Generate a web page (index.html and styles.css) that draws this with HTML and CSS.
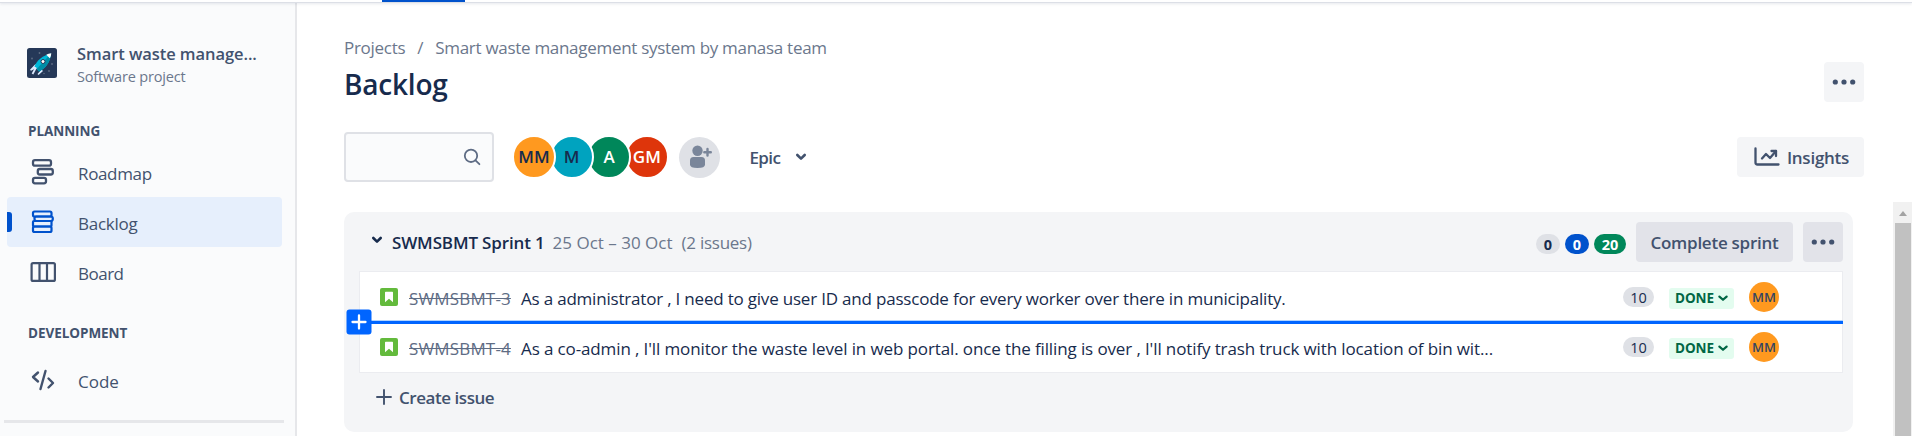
FILE: index.html
```html
<!DOCTYPE html>
<html lang="en">
<head>
<meta charset="utf-8">
<title>Backlog</title>
<link rel="stylesheet" href="styles.css">
</head>
<body>
<header class="topbar"><div class="topbar-tab"></div></header>
<div class="shell">
  <nav class="sidebar">
    <div class="project">
      <svg class="project-logo" viewBox="0 0 30 30">
        <rect width="30" height="30" rx="2.5" fill="#253858"/>
        <g fill="#5e6c84"><circle cx="12.500" cy="5" r=".9"/><circle cx="5" cy="10.500" r=".9"/><circle cx="25" cy="16" r=".9"/><circle cx="22" cy="23" r=".9"/><circle cx="17" cy="25.500" r=".8"/></g>
        <path d="M8.500 16 3 21.800l1 .9 6-3zM14.500 21.500 10.500 26l1 1 4.500-4z" fill="#deebff"/>
        <path d="M24 5.500C16 7 9.500 13 7.500 18.500l4.500 5C18 21 23.500 14 24 5.500z" fill="#00b8d9"/>
        <path d="M24 5.500c-.5 8.500-6 15.500-12 18L9.700 21z" fill="#008da6"/>
        <path d="M24.300 5.200c-2 .3-3.600.8-5 1.600l3.500 3.500c.9-1.600 1.400-3.300 1.500-5.100z" fill="#fff"/>
        <path d="M9 19.500 5.500 26" stroke="#deebff" stroke-width="1.800"/>
        <circle cx="16" cy="13.500" r="2" fill="#fff" stroke="#253858"/>
      </svg>
      <div class="project-text"><div class="project-name">Smart waste manage...</div><div class="project-type">Software project</div></div>
    </div>
    <h2 class="nav-heading">PLANNING</h2>
    <a class="nav-item">
      <svg class="nav-icon" viewBox="0 0 30 30" fill="none" stroke="currentColor" stroke-width="2.300"><rect x="6" y="3.200" width="18" height="5.500" rx="2"/><rect x="10.800" y="12" width="15" height="5.500" rx="2"/><rect x="6" y="20.800" width="13" height="5.500" rx="2"/></svg>
      <span class="t nav-roadmap">Roadmap</span></a>
    <a class="nav-item active">
      <svg class="nav-icon" viewBox="0 0 30 30" fill="none" stroke="currentColor" stroke-width="2.200"><rect x="6" y="4.500" width="18.500" height="5" rx="1.500"/><rect x="7.500" y="9.500" width="18.300" height="4.500" rx="2"/><rect x="6" y="14" width="18.500" height="5.500" rx="1"/><rect x="6" y="19.500" width="18.500" height="5.500" rx="1.500"/></svg>
      <span class="t nav-backlog">Backlog</span></a>
    <a class="nav-item">
      <svg class="nav-icon" viewBox="0 0 30 30" fill="none" stroke="currentColor" stroke-width="2.200"><rect x="4.600" y="6.100" width="23.300" height="17.800" rx="1.500"/><path d="M12.500 6v18M20 6v18"/></svg>
      <span class="t nav-board">Board</span></a>
    <h2 class="nav-heading second">DEVELOPMENT</h2>
    <a class="nav-item">
      <svg class="nav-icon" viewBox="0 0 30 30" fill="none" stroke="currentColor" stroke-width="2.400" stroke-linecap="round" stroke-linejoin="round"><path d="M11 7.500 6 12l5 4.500M18.500 6l-5 18M21.500 13.500l4.500 4.500-4.500 4.500"/></svg>
      <span class="t">Code</span></a>
    <div class="nav-divider"></div>
  </nav>
  <main class="main">
    <div class="crumbs"><span>Projects</span><span>/</span><span>Smart waste management system by manasa team</span></div>
    <div class="title-row">
      <h1>Backlog</h1>
      <button class="btn icon-btn"><svg viewBox="0 0 24 6" width="24" height="6" fill="currentColor"><circle cx="3.300" cy="3" r="2.600"/><circle cx="12" cy="3" r="2.600"/><circle cx="20.700" cy="3" r="2.600"/></svg></button>
    </div>
    <div class="toolbar">
      <div class="search"><svg width="18" height="18" viewBox="0 0 18 18" fill="none" stroke="#5e6c84" stroke-width="1.800" stroke-linecap="round"><circle cx="8" cy="7.800" r="6.200"/><path d="m12.500 12.300 3.900 3.900"/></svg></div>
      <div class="people">
        <span class="avatar orange">MM</span><span class="avatar teal">M</span><span class="avatar green">A</span><span class="avatar red">GM</span>
      </div>
      <div class="add-person"><svg width="41" height="41" viewBox="0 0 41 41" fill="#7a869a"><circle cx="18.500" cy="13.800" r="5.200"/><path d="M11 23.500q0-3.500 3.500-3.500h8q3.500 0 3.500 3.500v4q0 3.500-7.500 3.500T11 27.500z"/><path d="M28.500 12v6.500M25.300 15.200h6.500" stroke="#7a869a" stroke-width="2.400" stroke-linecap="round"/></svg></div>
      <div class="filter"><span class="t filter-name">Epic</span><svg width="12" height="8" viewBox="0 0 12 8" fill="none" stroke="currentColor" stroke-width="2.600" stroke-linecap="round" stroke-linejoin="round"><path d="M2.300 2 6 5.600 9.700 2"/></svg></div>
      <button class="btn insights"><svg width="26" height="20" viewBox="0 0 26 20" fill="none" stroke="currentColor" stroke-width="2.300" stroke-linecap="round" stroke-linejoin="round"><path d="M1.500 1.500v14q0 2 2 2h21"/><path d="m8 11.500 4-4.500 4 4 6-7"/><path d="M17.500 4H22v5"/></svg><span class="t">Insights</span></button>
    </div>
    <section class="sprint">
      <div class="sprint-head">
        <svg class="fold" width="12" height="8" viewBox="0 0 12 8" fill="none" stroke="#172b4d" stroke-width="2.600" stroke-linecap="round" stroke-linejoin="round"><path d="M2.300 2 6 5.600 9.700 2"/></svg>
        <span class="t sprint-name">SWMSBMT Sprint 1</span>
        <span class="t sprint-dates">25 Oct – 30 Oct</span>
        <span class="t sprint-count">(2 issues)</span>
        <div class="counts"><span class="count todo">0</span><span class="count doing">0</span><span class="count done">20</span></div>
        <button class="btn dark complete"><span class="t">Complete sprint</span></button>
        <button class="btn dark icon-btn"><svg viewBox="0 0 24 6" width="24" height="6" fill="currentColor"><circle cx="3.300" cy="3" r="2.600"/><circle cx="12" cy="3" r="2.600"/><circle cx="20.700" cy="3" r="2.600"/></svg></button>
      </div>
      <div class="issues">
        <div class="issue">
          <svg class="story" viewBox="0 0 18 18"><rect width="18" height="18" rx="2" fill="#63ba3c"/><path d="M5 4.500q0-.7.700-.7h6.600q.7 0 .7.700v9.700L9 10.700l-4 3.500z" fill="#fff"/></svg>
          <span class="t key">SWMSBMT-3</span>
          <span class="t summary tight">As a administrator , I need to give user ID and passcode for every worker over there in municipality.</span>
          <span class="points">10</span>
          <span class="status"><span class="t">DONE</span><svg width="10" height="7" viewBox="0 0 10 7" fill="none" stroke="currentColor" stroke-width="2.200" stroke-linecap="round" stroke-linejoin="round"><path d="m1.400 1.600 3.600 3.200 3.600-3.200"/></svg></span>
          <span class="avatar small orange">MM</span>
        </div>
        <div class="issue">
          <svg class="story" viewBox="0 0 18 18"><rect width="18" height="18" rx="2" fill="#63ba3c"/><path d="M5 4.500q0-.7.700-.7h6.600q.7 0 .7.700v9.700L9 10.700l-4 3.500z" fill="#fff"/></svg>
          <span class="t key">SWMSBMT-4</span>
          <span class="t summary">As a co-admin , I'll monitor the waste level in web portal. once the filling is over , I'll notify trash truck with location of bin wit...</span>
          <span class="points">10</span>
          <span class="status"><span class="t">DONE</span><svg width="10" height="7" viewBox="0 0 10 7" fill="none" stroke="currentColor" stroke-width="2.200" stroke-linecap="round" stroke-linejoin="round"><path d="m1.400 1.600 3.600 3.200 3.600-3.200"/></svg></span>
          <span class="avatar small orange">MM</span>
        </div>
        <div class="insert"><svg class="insert-btn" viewBox="0 0 26 26"><rect x=".5" y=".5" width="25" height="25" rx="3" fill="#0065ff"/><path d="M13 6.500v13M6.500 13h13" stroke="#fff" stroke-width="2.300" stroke-linecap="round"/></svg></div>
      </div>
      <div class="create"><svg width="16" height="16" viewBox="0 0 16 16" stroke="currentColor" stroke-width="1.900" stroke-linecap="round"><path d="M8 1v14M1 8h14"/></svg><span class="t">Create issue</span></div>
    </section>
  </main>
  <div class="scrollbar"><div class="scroll-arrow"></div><div class="scroll-thumb"></div></div>
</div>
</body>
</html>
```
FILE: styles.css
```css
* { box-sizing: border-box; }
body { margin: 0; height: 436px; overflow: hidden; display: flex; flex-direction: column; background: #fff; color: #172b4d; font: 17px/24px "Open Sans", "Noto Sans", sans-serif; }
h1, h2 { margin: 0; }
svg { display: block; flex: none; }
.t { white-space: nowrap; padding-top: 2px; }
.topbar { flex: none; height: 3px; border-bottom: 1px solid #dcdfe6; box-shadow: 0 1px 3px rgba(9,30,66,.1); padding-left: 382px; z-index: 1; }
.topbar-tab { width: 83px; height: 2px; background: #0052cc; }
.shell { flex: 1; display: flex; min-height: 0; }
.sidebar { width: 297px; flex: none; background: #fafbfc; border-right: 2px solid #e6e7ea; color: #42526e; padding: 45px 13px 0 7px; overflow: hidden; }
.project { display: flex; gap: 20px; padding-left: 20px; height: 44px; white-space: nowrap; }
.project-logo { width: 30px; height: 30px; }
.project-text { margin-top: -6px; }
.project-name { font-weight: 600; font-size: 16.500px; line-height: 24px; letter-spacing: -.07px; }
.project-type { color: #6b778c; font-size: 14.500px; line-height: 22px; letter-spacing: -.17px; }
.nav-heading { font-size: 13.500px; line-height: 20px; font-weight: 700; padding-left: 21px; margin: 29px 0 6px; letter-spacing: -.05px; }
.nav-heading.second { margin: 26px 0 12px; }
.nav-item { position: relative; display: flex; align-items: center; gap: 21px; height: 50px; padding-left: 20px; border-radius: 4px; }
.nav-item .t { padding-top: 3px; }
.nav-icon { width: 30px; height: 30px; }
.nav-item.active { background: #e6effc; }
.nav-item.active .nav-icon { color: #0052cc; }
.nav-item.active::before { content: ""; position: absolute; left: 0; top: 15px; width: 5px; height: 20px; background: #0052cc; border-radius: 0 3px 3px 0; }
.nav-roadmap { letter-spacing: -.35px; }
.nav-backlog { letter-spacing: -.25px; }
.nav-board { letter-spacing: -.5px; }
.nav-divider { margin: 15px -2px 0 -3px; height: 3px; background: #e6e7ea; }
.main { flex: 1; padding: 33px 0 0 47px; min-width: 0; }
.crumbs { display: flex; gap: 12px; color: #6b778c; letter-spacing: -.29px; }
.title-row { display: flex; justify-content: space-between; align-items: center; height: 40px; margin-top: 2px; padding-right: 29px; }
h1 { font-size: 28px; line-height: 40px; font-weight: 600; letter-spacing: -.2px; padding-top: 3px; }
.btn { border: 0; padding: 0; display: flex; align-items: center; justify-content: center; height: 40px; border-radius: 4px; background: #f4f5f7; color: #42526e; font: 600 17px/24px "Open Sans", sans-serif; letter-spacing: -.25px; }
.icon-btn { width: 40px; }
.dark { background: #e2e3e9; }
.toolbar { display: flex; align-items: center; margin-top: 30px; height: 50px; padding-right: 29px; }
.search { width: 150px; height: 50px; border: 2px solid #dfe1e6; border-radius: 4px; background: #fafbfc; display: flex; align-items: center; justify-content: flex-end; padding-right: 11px; }
.people { display: flex; margin-left: 18px; }
.avatar { width: 44px; height: 44px; margin-right: -6.400px; border-radius: 50%; border: 2px solid #fff; display: flex; align-items: center; justify-content: center; font-size: 17px; font-weight: 600; position: relative; }
.people .avatar:nth-child(1) { z-index: 4; }
.people .avatar:nth-child(2) { z-index: 3; }
.people .avatar:nth-child(3) { z-index: 2; }
.orange { background-color: #ff991f; }
.teal { background-color: #00a3bf; }
.green { background-color: #00875a; color: #fff; }
.red { background-color: #de350b; color: #fff; }
.add-person { width: 41px; height: 41px; border-radius: 50%; background: #dfe1e6; margin-left: 17px; }
.filter { display: flex; align-items: center; gap: 15px; margin-left: 29px; color: #42526e; font-weight: 600; }
.filter-name { letter-spacing: -.6px; }
.insights { width: 127px; margin-left: auto; gap: 7px; padding-left: 2px; }
.sprint { width: 1509px; height: 220px; margin-top: 30px; background: #f4f5f7; border-radius: 10px; padding: 10px 10px 0 15px; }
.sprint-head { display: flex; align-items: center; height: 40px; }
.fold { margin: -4px 9px 0 12px; }
.sprint-name { font-weight: 600; margin-right: 8px; letter-spacing: -.15px; }
.sprint-dates { color: #6b778c; margin-right: 9px; }
.sprint-count { color: #6b778c; letter-spacing: -.25px; }
.counts { display: flex; gap: 5px; margin-left: auto; margin-right: 10px; }
.count { height: 20px; min-width: 24px; padding: 1px 7px 0; border-radius: 10px; font-size: 14.500px; line-height: 20px; font-weight: 700; text-align: center; margin-top: 3px; }
.count.done { width: 32px; }
.todo { background: #dfe1e6; }
.doing { background: #0052cc; color: #fff; }
.done { background: #00875a; color: #fff; }
.complete { width: 157px; margin-right: 10px; }
.issues { position: relative; margin-top: 9px; border: 1px solid #ebecf0; background: #fff; }
.issue { display: flex; align-items: center; height: 50px; padding-left: 20px; }
.issue > .t { padding-top: 3px; }
.story { width: 18px; height: 18px; margin-right: 11px; }
.key { color: #5e6c84; text-decoration: line-through; letter-spacing: .16px; width: 102px; margin-right: 10px; }
.summary { flex: 1; letter-spacing: -.12px; }
.summary.tight { letter-spacing: -.2px; }
.points { width: 31px; height: 20px; border-radius: 10px; background: #dfe1e6; font-size: 14.500px; line-height: 21px; text-align: center; margin-right: 15px; }
.status { width: 65px; height: 21px; margin-top: 2px; border-radius: 3px; background: #e3fcef; color: #006644; font-size: 13.500px; line-height: 19px; font-weight: 700; display: flex; align-items: center; justify-content: center; gap: 4px; margin-right: 15px; letter-spacing: -.1px; }
.status .t { padding-top: 0; }
.small { width: 30px; height: 30px; border: 0; font-size: 13px; margin-right: 63px; color: #344563; }
.insert { position: absolute; left: 0; right: -1px; top: 48px; height: 4px; background: #0065ff; border-top: 1px solid #b3d4ff; }
.insert-btn { position: absolute; left: -14px; top: -12px; width: 26px; height: 26px; }
.create { display: flex; align-items: center; gap: 7px; padding: 11px 0 0 17px; color: #42526e; font-weight: 600; letter-spacing: -.45px; }
.scrollbar { width: 19px; flex: none; margin-top: 199px; background: #f1f1f1; display: flex; flex-direction: column; align-items: center; }
.scroll-arrow { width: 0; height: 0; margin: 9px 0 7px; border: 4px solid transparent; border-top: 0; border-bottom: 5px solid #a3a3a3; }
.scroll-thumb { width: 16px; flex: 1; background: #c1c1c1; }
```
